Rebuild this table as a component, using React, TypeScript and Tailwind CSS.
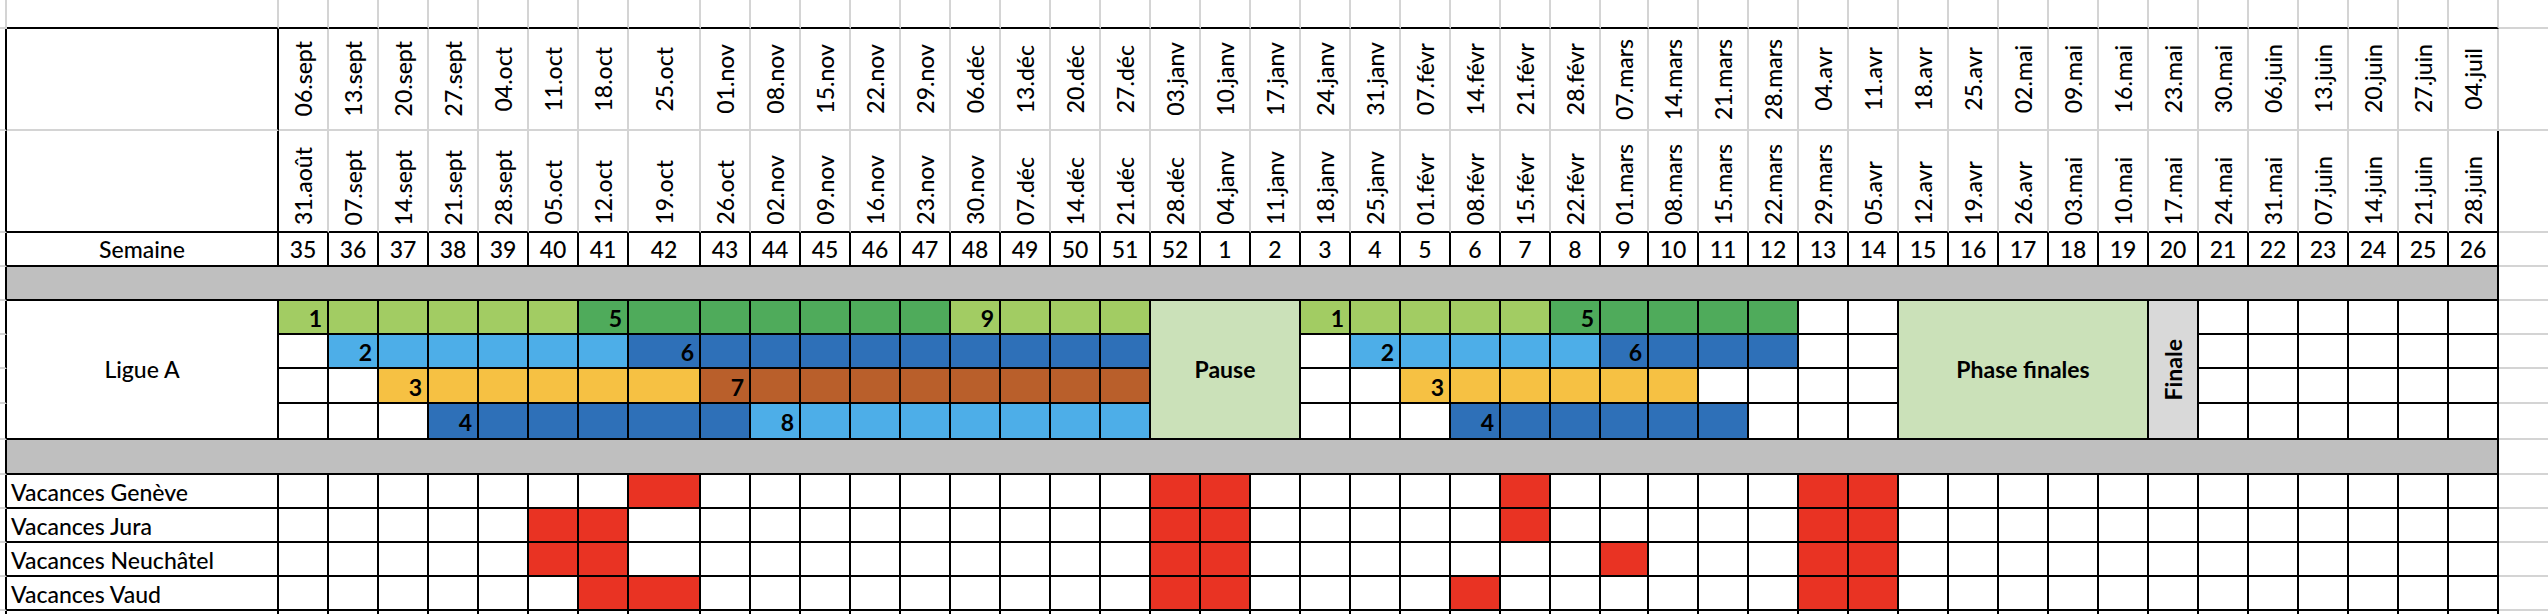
const upper = [
  '06.sept', '13.sept', '20.sept', '27.sept', '04.oct', '11.oct', '18.oct', '25.oct',
  '01.nov', '08.nov', '15.nov', '22.nov', '29.nov', '06.déc', '13.déc', '20.déc', '27.déc',
  '03.janv', '10.janv', '17.janv', '24.janv', '31.janv', '07.févr', '14.févr', '21.févr', '28.févr',
  '07.mars', '14.mars', '21.mars', '28.mars', '04.avr', '11.avr', '18.avr', '25.avr',
  '02.mai', '09.mai', '16.mai', '23.mai', '30.mai', '06.juin', '13.juin', '20.juin', '27.juin', '04.juil',
];

const lower = [
  '31.août', '07.sept', '14.sept', '21.sept', '28.sept', '05.oct', '12.oct', '19.oct',
  '26.oct', '02.nov', '09.nov', '16.nov', '23.nov', '30.nov', '07.déc', '14.déc', '21.déc',
  '28.déc', '04.janv', '11.janv', '18.janv', '25.janv', '01.févr', '08.févr', '15.févr', '22.févr',
  '01.mars', '08.mars', '15.mars', '22.mars', '29.mars', '05.avr', '12.avr', '19.avr',
  '26.avr', '03.mai', '10.mai', '17.mai', '24.mai', '31.mai', '07.juin', '14.juin', '21.juin', '28.juin',
];

const weeks = [
  35, 36, 37, 38, 39, 40, 41, 42, 43, 44, 45, 46, 47, 48, 49, 50, 51, 52,
  ...Array.from({ length: 26 }, (_, i) => i + 1),
];

const LG = 'bg-[#a2cc63]';
const DG = 'bg-[#4fab5b]';
const LB = 'bg-[#4daee8]';
const DB = 'bg-[#2e70b8]';
const YE = 'bg-[#f6c143]';
const BR = 'bg-[#b95f2b]';

// [from, to, colour, label] — index into weeks
type Seg = [number, number, string, string];

const ligue: Seg[][] = [
  [[0, 5, LG, '1'], [6, 12, DG, '5'], [13, 16, LG, '9'], [20, 24, LG, '1'], [25, 29, DG, '5']],
  [[1, 6, LB, '2'], [7, 16, DB, '6'], [21, 25, LB, '2'], [26, 29, DB, '6']],
  [[2, 7, YE, '3'], [8, 16, BR, '7'], [22, 27, YE, '3']],
  [[3, 8, DB, '4'], [9, 16, LB, '8'], [23, 28, DB, '4']],
];

const vacances: [string, number[]][] = [
  ['Vacances Genève', [7, 17, 18, 24, 30, 31]],
  ['Vacances Jura', [5, 6, 17, 18, 24, 30, 31]],
  ['Vacances Neuchâtel', [5, 6, 17, 18, 26, 30, 31]],
  ['Vacances Vaud', [6, 7, 17, 18, 23, 30, 31]],
];

function segAt(row: number, i: number) {
  for (const [a, b, bg, label] of ligue[row]) {
    if (i >= a && i <= b) return { bg, label: i === a ? label : '' };
  }
  return { bg: 'bg-white', label: '' };
}

const LeftPad = () => <div className="border-r-2 border-b-2 border-r-black border-b-[#d4d4d4]" />;
const RightPad = () => <div className="border-b-2 border-b-[#d4d4d4]" />;

function LigueCell({ row, i }: { row: number; i: number }) {
  const { bg, label } = segAt(row, i);
  return (
    <div className={`border-r-2 border-b-2 border-black flex items-center justify-end pr-[5px] pt-[3px] font-bold ${bg}`}>
      {label}
    </div>
  );
}

export default function App() {
  const range = (a: number, b: number) => Array.from({ length: b - a + 1 }, (_, k) => a + k);

  return (
    <div className="w-[2548px] h-[614px] overflow-hidden bg-white text-black text-[23px] leading-none font-medium font-['Lato',sans-serif]">
      <div className="grid grid-cols-[7px_272px_repeat(7,50px)_72px_repeat(18,50px)_48px_repeat(17,50px)_49px] grid-rows-[29px_102px_102px_34px_34px_34px_34px_35px_36px_35px_34px_34px_34px_34px_34px]">
        {/* sheet row above the table */}
        <div className="border-r-2 border-b-2 border-[#d4d4d4]" />
        <div className="border-r-2 border-b-2 border-r-[#d4d4d4] border-b-black" />
        {weeks.map((w) => (
          <div key={`t${w}`} className="border-r-2 border-b-2 border-r-[#d4d4d4] border-b-black" />
        ))}
        <RightPad />

        {/* dates: following week */}
        <LeftPad />
        <div className="border-r-2 border-b-2 border-r-black border-b-[#d4d4d4]" />
        {upper.map((d) => (
          <div key={d} className="border-r-2 border-b-2 border-[#d4d4d4] flex items-center justify-center">
            <span className="[writing-mode:vertical-rl] rotate-180 whitespace-nowrap">{d}</span>
          </div>
        ))}
        <RightPad />

        {/* dates: week start */}
        <LeftPad />
        <div className="border-r-2 border-b-2 border-black" />
        {lower.map((d, i) => (
          <div
            key={d}
            className={`border-r-2 border-b-2 border-b-black flex items-end justify-center pb-[6px] ${
              i === 43 ? 'border-r-black' : 'border-r-[#d4d4d4]'
            }`}
          >
            <span className="[writing-mode:vertical-rl] rotate-180 whitespace-nowrap">{d}</span>
          </div>
        ))}
        <RightPad />

        {/* week numbers */}
        <LeftPad />
        <div className="border-r-2 border-b-2 border-black flex items-center justify-center">Semaine</div>
        {weeks.map((w) => (
          <div key={`w${w}`} className="border-r-2 border-b-2 border-black flex items-center justify-center">
            {w}
          </div>
        ))}
        <RightPad />

        {/* separator */}
        <LeftPad />
        <div className="col-span-45 bg-[#bfbfbf] border-r-2 border-b-2 border-black" />
        <RightPad />

        {/* Ligue A */}
        {[0, 1, 2, 3].map((row) => (
          <>
            <LeftPad key={`lp${row}`} />
            {row === 0 && (
              <div className="row-span-4 border-r-2 border-b-2 border-black flex items-center justify-center">
                Ligue A
              </div>
            )}
            {range(0, 16).map((i) => (
              <LigueCell key={`${row}-${i}`} row={row} i={i} />
            ))}
            {row === 0 && (
              <div className="col-span-3 row-span-4 bg-[#cbe1b9] border-r-2 border-b-2 border-black flex items-center justify-center font-bold">
                Pause
              </div>
            )}
            {range(20, 31).map((i) => (
              <LigueCell key={`${row}-${i}`} row={row} i={i} />
            ))}
            {row === 0 && (
              <>
                <div className="col-span-5 row-span-4 bg-[#cbe1b9] border-r-2 border-b-2 border-black flex items-center justify-center font-bold">
                  Phase finales
                </div>
                <div className="row-span-4 bg-[#d9d9d9] border-r-2 border-b-2 border-black flex items-center justify-center font-bold">
                  <span className="[writing-mode:vertical-rl] rotate-180">Finale</span>
                </div>
              </>
            )}
            {range(38, 43).map((i) => (
              <LigueCell key={`${row}-${i}`} row={row} i={i} />
            ))}
            <RightPad key={`rp${row}`} />
          </>
        ))}

        {/* separator */}
        <LeftPad />
        <div className="col-span-45 bg-[#bfbfbf] border-r-2 border-b-2 border-black" />
        <RightPad />

        {/* holidays */}
        {vacances.map(([name, red]) => (
          <>
            <LeftPad key={`lp${name}`} />
            <div key={name} className="border-r-2 border-b-2 border-black flex items-center pl-[4px] pt-[3px]">
              {name}
            </div>
            {weeks.map((w, i) => (
              <div
                key={`${name}${w}`}
                className={`border-r-2 border-b-2 border-black ${red.includes(i) ? 'bg-[#e93323]' : 'bg-white'}`}
              />
            ))}
            <RightPad key={`rp${name}`} />
          </>
        ))}

        {/* next sheet row, cut off */}
        <LeftPad />
        <div className="border-r-2 border-b-2 border-black" />
        {weeks.map((w) => (
          <div key={`e${w}`} className="border-r-2 border-b-2 border-black" />
        ))}
        <RightPad />
      </div>
    </div>
  );
}
